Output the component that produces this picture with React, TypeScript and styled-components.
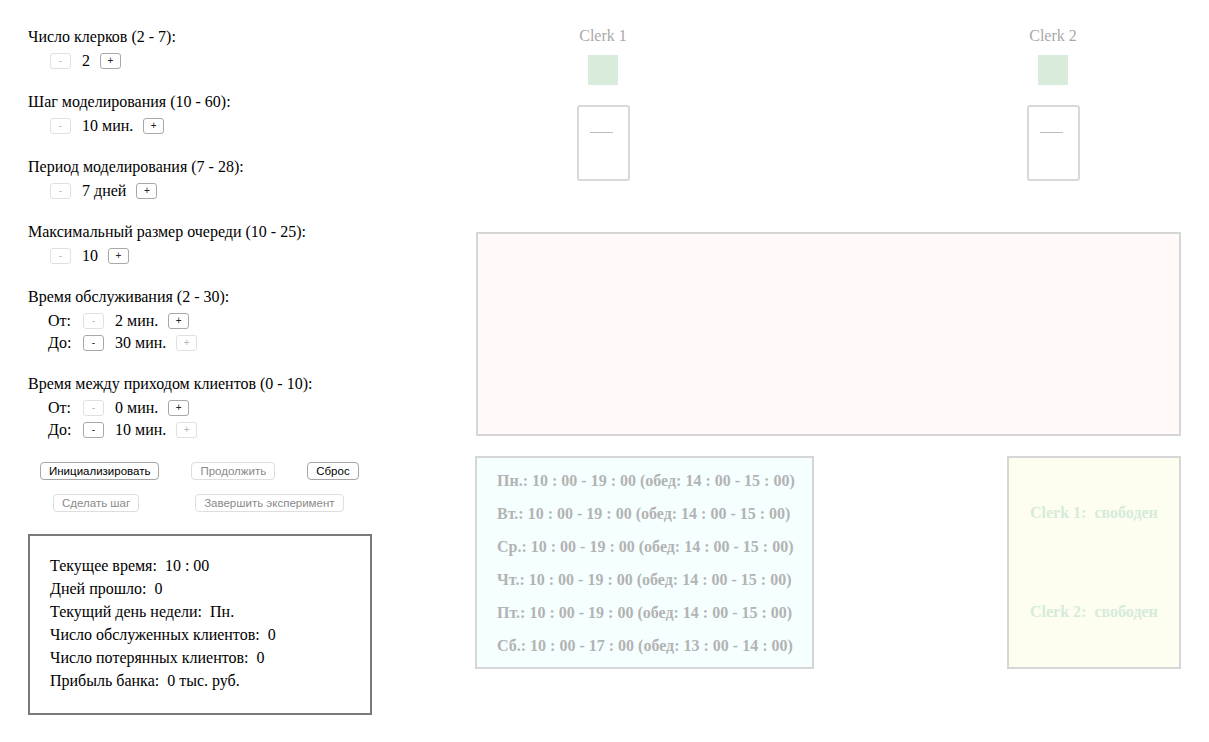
import React from 'react';
import styled, { createGlobalStyle } from 'styled-components';

const GlobalStyle = createGlobalStyle`
  body {
    margin: 0;
    background: #ffffff;
    font-family: "Liberation Serif", "Times New Roman", serif;
    color: #000;
  }
`

const Page = styled('div')`
  display: flex;
  padding: 27px 0 0 28px;
`

const Settings = styled('div')`
  width: 448px;
  flex-shrink: 0;
  font-size: 16px;
`

const Param = styled('div')`
  margin-bottom: 20px;
`

const ParamLabel = styled('div')`
  line-height: 20px;
  height: 20px;
`

const ControlRow = styled('div')<{ $indent?: number; $first?: boolean }>`
  display: flex;
  align-items: center;
  height: 22px;
  padding-left: ${p => p.$indent ?? 22}px;
  margin-top: ${p => (p.$first === false ? 0 : 3)}px;
`

const RangeName = styled('span')`
  width: 35px;
`

const StepButton = styled('button')`
  width: 21px;
  height: 16px;
  padding: 0;
  font-family: "Liberation Sans", Arial, sans-serif;
  font-size: 10px;
  line-height: 14px;
  background: #fff;
  border: 1px solid ${p => (p.disabled ? '#e0e0e0' : '#a8a8a8')};
  border-radius: 3px;
  color: ${p => (p.disabled ? '#b8b8b8' : '#222')};
`

const Value = styled('span')`
  margin: 0 10px 0 11px;
`

const ButtonRow = styled('div')<{ $indent: number; $gap: number; $top: number }>`
  display: flex;
  gap: ${p => p.$gap}px;
  padding-left: ${p => p.$indent}px;
  margin-top: ${p => p.$top}px;
`

const ActionButton = styled('button')`
  height: 18px;
  padding: 0 8px;
  font-family: "Liberation Sans", Arial, sans-serif;
  font-size: 11.5px;
  background: #fff;
  border: 1px solid ${p => (p.disabled ? '#dedede' : '#a6a6a6')};
  border-radius: 4px;
  color: ${p => (p.disabled ? '#8a8a8a' : '#000')};
`

const Stats = styled('div')`
  margin-top: 22px;
  width: 344px;
  height: 181px;
  box-sizing: border-box;
  border: 2px solid #7a7a7a;
  padding: 18px 0 0 20px;
`

const StatLine = styled('div')`
  line-height: 23px;
  white-space: pre;
`

const Board = styled('div')`
  width: 705px;
  display: flex;
  flex-direction: column;
`

const ClerkRow = styled('div')`
  display: flex;
  gap: 350px;
  padding-left: 77px;
`

const Clerk = styled('div')`
  width: 100px;
  display: flex;
  flex-direction: column;
  align-items: center;
`

const ClerkName = styled('div')`
  color: #a9a9a9;
  font-size: 16px;
  line-height: 18px;
`

const ClerkLamp = styled('div')`
  width: 30px;
  height: 30px;
  margin-top: 10px;
  background: #d9ecdc;
`

const Desk = styled('div')`
  width: 53px;
  height: 76px;
  box-sizing: border-box;
  margin-top: 20px;
  border: 2px solid #d8d8d8;
  border-radius: 3px;
  padding: 25px 0 0 11px;
`

const DeskLine = styled('div')`
  width: 23px;
  height: 1px;
  background: #bdbdbd;
`

const Queue = styled('div')`
  margin-top: 51px;
  height: 204px;
  box-sizing: border-box;
  border: 2px solid #d6d6d6;
  background: #fffaf7;
`

const BottomRow = styled('div')`
  display: flex;
  justify-content: space-between;
  margin-top: 20px;
`

const Schedule = styled('div')`
  width: 339px;
  height: 213px;
  box-sizing: border-box;
  border: 2px solid #d6d6d6;
  background: #f5ffff;
  padding: 6px 0 0 20px;
  margin-left: -1px;
`

const ScheduleLine = styled('div')`
  color: #b3b3b3;
  font-weight: bold;
  font-size: 16px;
  line-height: 33px;
  white-space: pre;
`

const Status = styled('div')`
  width: 174px;
  height: 213px;
  box-sizing: border-box;
  border: 2px solid #d6d6d6;
  background: #fdfef0;
  padding: 45px 0 0 21px;
`

const StatusLine = styled('div')`
  color: #d6ebd9;
  font-weight: bold;
  font-size: 16px;
  line-height: 20px;
  margin-bottom: 79px;
  white-space: pre;
`

const params = [
  { label: 'Число клерков (2 - 7):', value: '2' },
  { label: 'Шаг моделирования (10 - 60):', value: '10 мин.' },
  { label: 'Период моделирования (7 - 28):', value: '7 дней' },
  { label: 'Максимальный размер очереди (10 - 25):', value: '10' },
]

const ranges = [
  {
    label: 'Время обслуживания (2 - 30):',
    from: '2 мин.',
    to: '30 мин.',
  },
  {
    label: 'Время между приходом клиентов (0 - 10):',
    from: '0 мин.',
    to: '10 мин.',
  },
]

const schedule = [
  'Пн.: 10 : 00 - 19 : 00 (обед: 14 : 00 - 15 : 00)',
  'Вт.: 10 : 00 - 19 : 00 (обед: 14 : 00 - 15 : 00)',
  'Ср.: 10 : 00 - 19 : 00 (обед: 14 : 00 - 15 : 00)',
  'Чт.: 10 : 00 - 19 : 00 (обед: 14 : 00 - 15 : 00)',
  'Пт.: 10 : 00 - 19 : 00 (обед: 14 : 00 - 15 : 00)',
  'Сб.: 10 : 00 - 17 : 00 (обед: 13 : 00 - 14 : 00)',
]

const stats = [
  'Текущее время:  10 : 00',
  'Дней прошло:  0',
  'Текущий день недели:  Пн.',
  'Число обслуженных клиентов:  0',
  'Число потерянных клиентов:  0',
  'Прибыль банка:  0 тыс. руб.',
]

const clerks = ['Clerk 1', 'Clerk 2']

function App() {
  return (
    <>
      <GlobalStyle />
      <Page>
        <Settings>
          {params.map(p => (
            <Param key={p.label}>
              <ParamLabel>{p.label}</ParamLabel>
              <ControlRow>
                <StepButton disabled>-</StepButton>
                <Value>{p.value}</Value>
                <StepButton>+</StepButton>
              </ControlRow>
            </Param>
          ))}
          {ranges.map(r => (
            <Param key={r.label}>
              <ParamLabel>{r.label}</ParamLabel>
              <ControlRow $indent={20}>
                <RangeName>От:</RangeName>
                <StepButton disabled>-</StepButton>
                <Value>{r.from}</Value>
                <StepButton>+</StepButton>
              </ControlRow>
              <ControlRow $indent={20} $first={false}>
                <RangeName>До:</RangeName>
                <StepButton>-</StepButton>
                <Value>{r.to}</Value>
                <StepButton disabled>+</StepButton>
              </ControlRow>
            </Param>
          ))}
          <ButtonRow $indent={12} $gap={32} $top={21}>
            <ActionButton>Инициализировать</ActionButton>
            <ActionButton disabled>Продолжить</ActionButton>
            <ActionButton>Сброс</ActionButton>
          </ButtonRow>
          <ButtonRow $indent={25} $gap={56} $top={14}>
            <ActionButton disabled>Сделать шаг</ActionButton>
            <ActionButton disabled>Завершить эксперимент</ActionButton>
          </ButtonRow>
          <Stats>
            {stats.map(s => (
              <StatLine key={s}>{s}</StatLine>
            ))}
          </Stats>
        </Settings>
        <Board>
          <ClerkRow>
            {clerks.map(c => (
              <Clerk key={c}>
                <ClerkName>{c}</ClerkName>
                <ClerkLamp />
                <Desk>
                  <DeskLine />
                </Desk>
              </Clerk>
            ))}
          </ClerkRow>
          <Queue />
          <BottomRow>
            <Schedule>
              {schedule.map(s => (
                <ScheduleLine key={s}>{s}</ScheduleLine>
              ))}
            </Schedule>
            <Status>
              {clerks.map(c => (
                <StatusLine key={c}>{c}:  свободен</StatusLine>
              ))}
            </Status>
          </BottomRow>
        </Board>
      </Page>
    </>
  );
}

export default App;
